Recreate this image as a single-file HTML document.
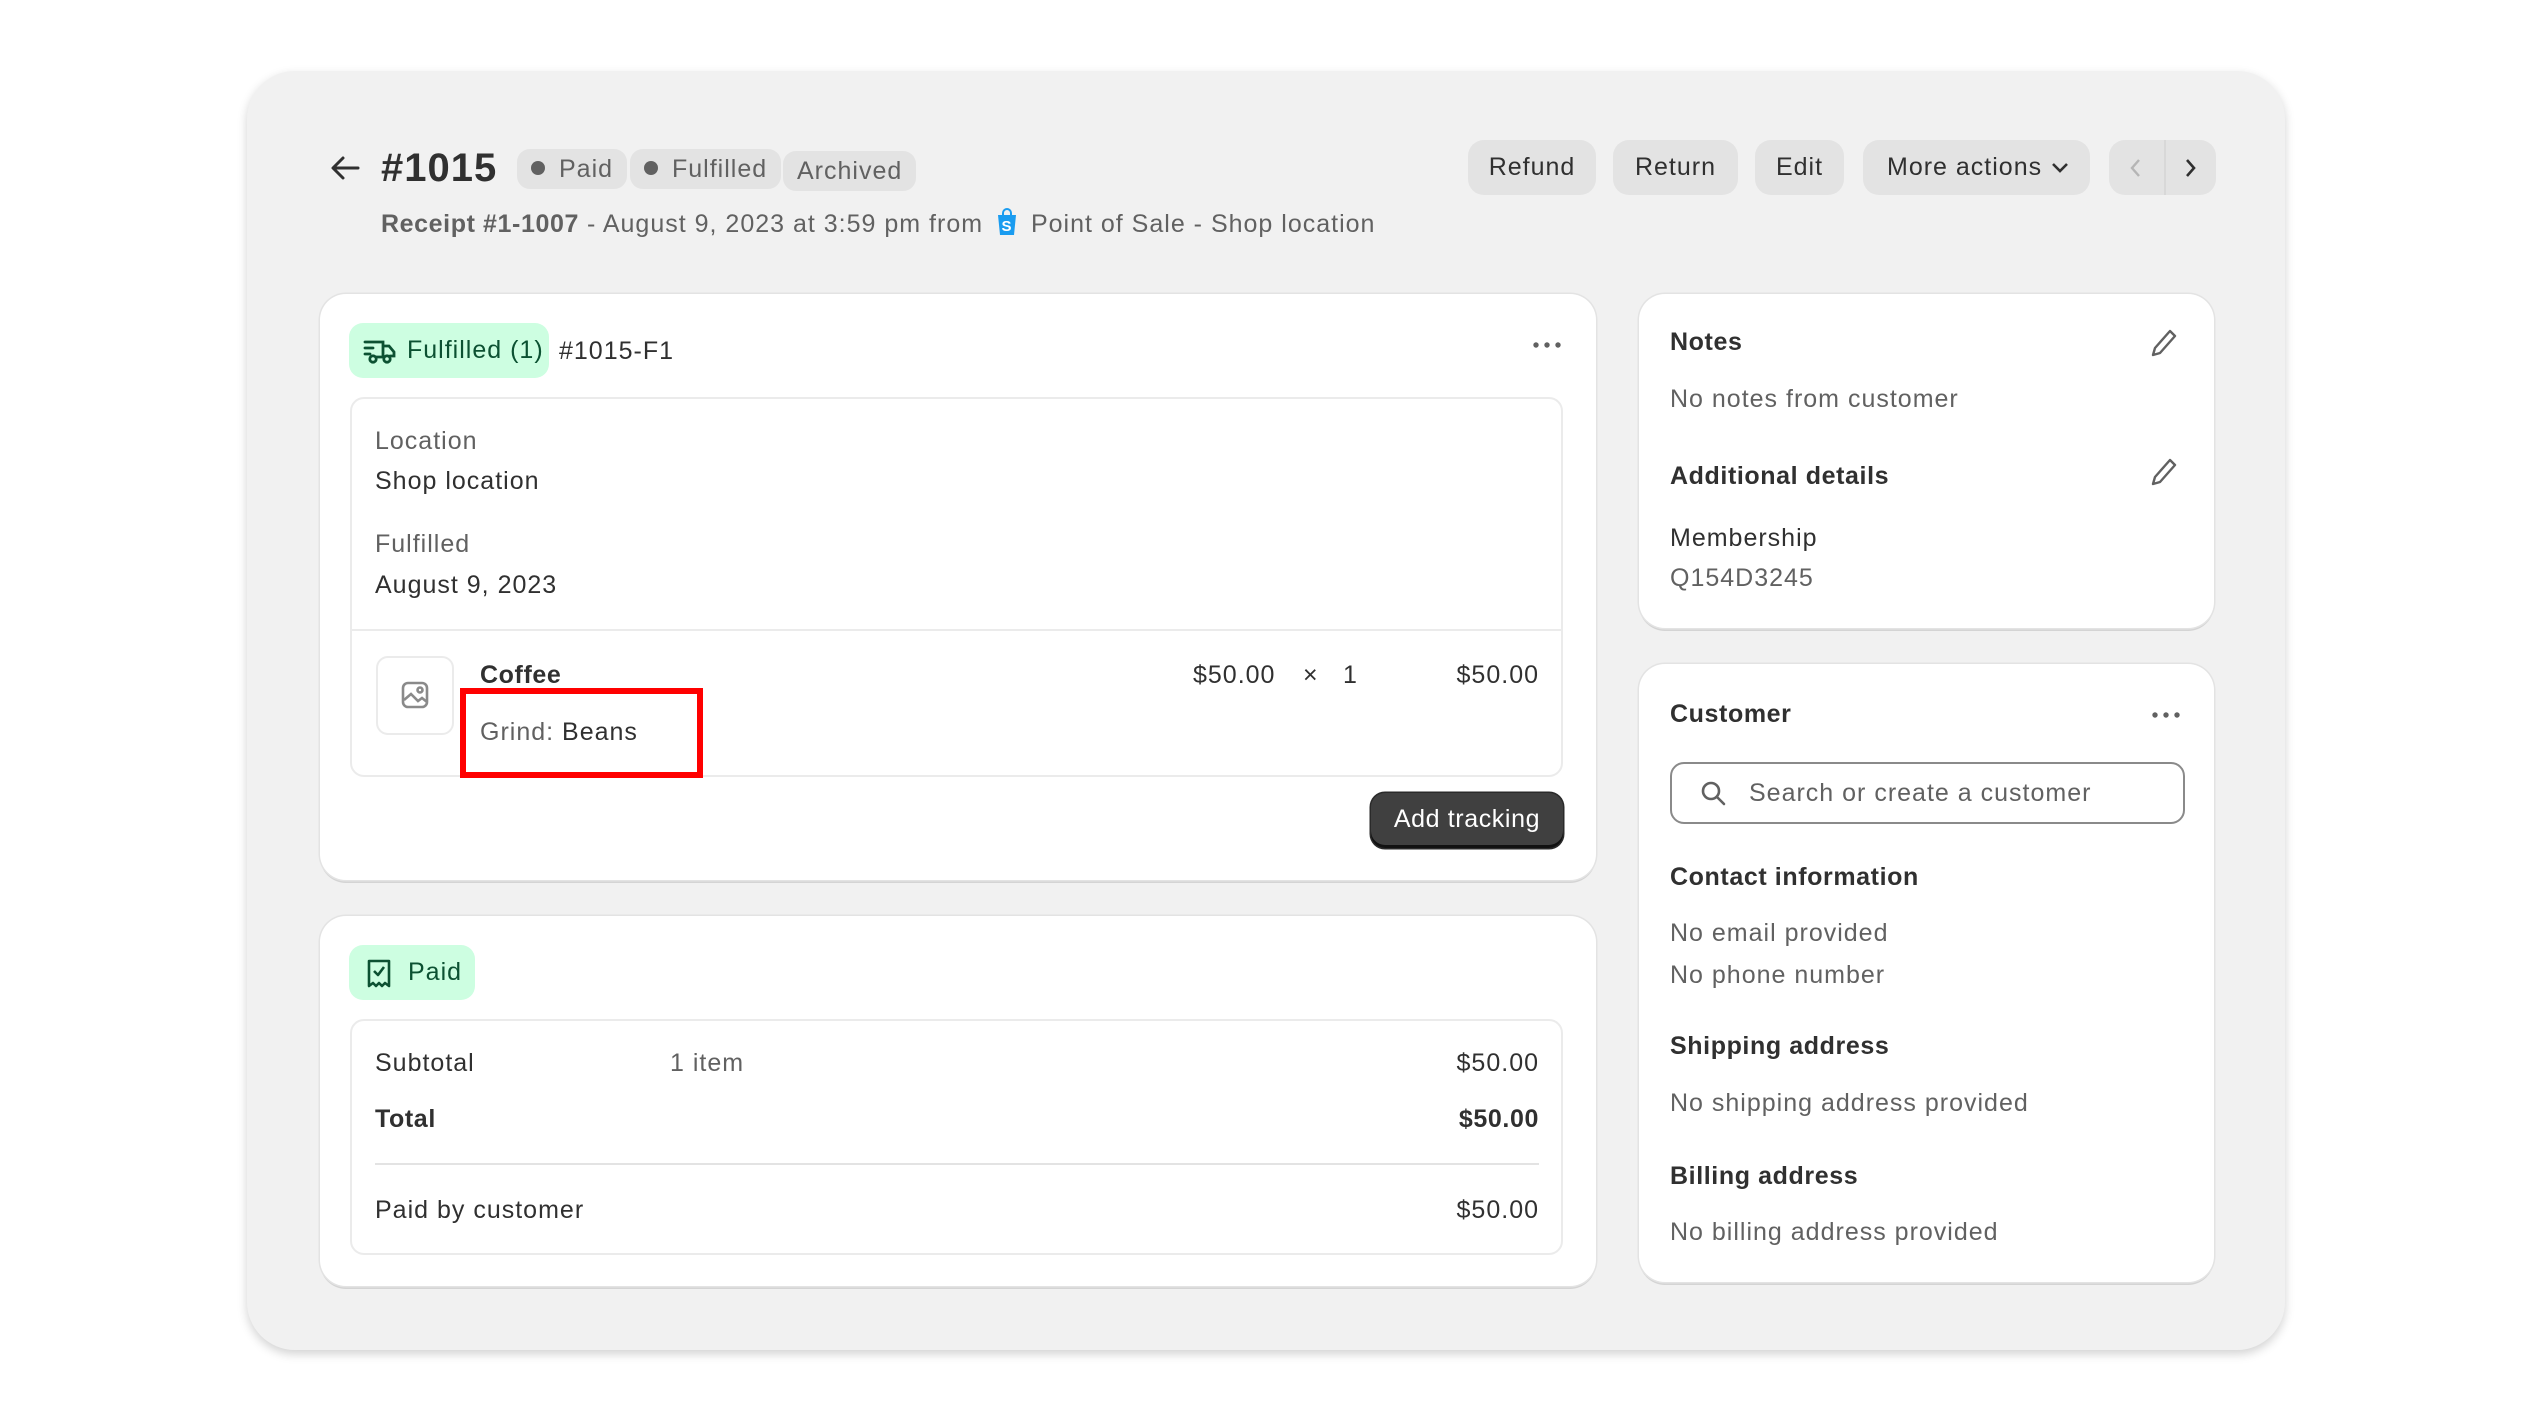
<!DOCTYPE html>
<html><head><meta charset="utf-8"><style>
*{margin:0;padding:0;box-sizing:border-box}
body{width:2532px;height:1422px;background:#fff;position:relative;overflow:hidden;font-family:"Liberation Sans",sans-serif;color:#303030;font-size:25px;letter-spacing:1px}
.a{position:absolute}
.t{position:absolute;line-height:32px;white-space:nowrap}
.frame{left:247px;top:71px;width:2038px;height:1279px;background:#f1f1f1;border-radius:48px;box-shadow:0 4px 10px rgba(0,0,0,.18)}
.card{position:absolute;background:#fff;border-radius:26px;box-shadow:0 0 0 1.5px #e3e3e3,0 3px 0 #d4d4d4}
.inner{position:absolute;border:2px solid #ebebeb;border-radius:14px;background:#fff}
.badge{position:absolute;background:#e3e3e3;border-radius:13px;height:40px;line-height:40px;color:#616161;font-size:25px;padding:0 14px}
.btn{position:absolute;background:#e3e3e3;border-radius:16px;height:55px;line-height:55px;text-align:center;font-size:25px;color:#303030}
.b{font-weight:bold;letter-spacing:0.6px}
.s{color:#616161}
.dot{display:inline-block;width:14px;height:14px;border-radius:50%;background:#616161;margin-right:14px;vertical-align:middle;position:relative;top:-2px}
.green{position:absolute;background:#cdfee1;border-radius:14px;color:#0c5132;font-size:25px}
</style></head><body>
<div class="a frame"></div>

<svg class="a" style="left:330px;top:155px" width="30" height="26" viewBox="0 0 30 26"><path d="M28 13H4M13 3L3 13l10 10" stroke="#303030" stroke-width="3" fill="none" stroke-linecap="round" stroke-linejoin="round"/></svg>
<div class="t b" style="left:381px;top:146px;font-size:40px;line-height:44px;letter-spacing:1px">#1015</div>
<div class="badge" style="left:517px;top:149px"><span class="dot"></span>Paid</div>
<div class="badge" style="left:630px;top:149px"><span class="dot"></span>Fulfilled</div>
<div class="badge" style="left:783px;top:151px">Archived</div>

<div class="btn" style="left:1468px;top:140px;width:128px">Refund</div>
<div class="btn" style="left:1613px;top:140px;width:125px">Return</div>
<div class="btn" style="left:1755px;top:140px;width:89px">Edit</div>
<div class="btn" style="left:1863px;top:140px;width:227px;text-align:left;padding-left:24px">More actions
<svg style="position:absolute;left:188px;top:22px" width="18" height="12" viewBox="0 0 18 12"><path d="M2 2l7 7 7-7" stroke="#303030" stroke-width="2.6" fill="none"/></svg></div>
<div class="btn" style="left:2109px;top:140px;width:107px"></div>
<div class="a" style="left:2164px;top:140px;width:2px;height:55px;background:#d8d8d8"></div>
<svg class="a" style="left:2128px;top:157px" width="14" height="22" viewBox="0 0 14 22"><path d="M11 3L4 11l7 8" stroke="#b5b5b5" stroke-width="2.4" fill="none"/></svg>
<svg class="a" style="left:2184px;top:157px" width="14" height="22" viewBox="0 0 14 22"><path d="M3 3l7 8-7 8" stroke="#303030" stroke-width="2.6" fill="none"/></svg>

<div class="t s" style="left:381px;top:207px"><span class="b" style="color:#616161">Receipt #1-1007</span> - August 9, 2023 at 3:59 pm from <svg style="vertical-align:-5px;margin:0 4px" width="24" height="30" viewBox="0 0 24 30"><path d="M3 8h18l-2 20H5z" fill="#1a9cf0"/><path d="M8 8V6a4 4 0 018 0v2" stroke="#1a9cf0" stroke-width="2" fill="none"/><text x="12" y="24" font-size="15" fill="#fff" text-anchor="middle" font-weight="bold" font-family="Liberation Sans">S</text></svg> Point of Sale - Shop location</div>

<!-- Fulfilled card -->
<div class="card" style="left:320px;top:294px;width:1276px;height:586px"></div>
<div class="green" style="left:349px;top:323px;width:200px;height:55px;line-height:55px;padding-left:58px">Fulfilled (1)</div>
<svg class="a" style="left:363px;top:337px" width="34" height="28" viewBox="0 0 34 28"><g stroke="#0c5132" stroke-width="2.8" fill="none" stroke-linecap="round"><path d="M2 5h18v14M20 9h6l5 6v4h-4M2 11h8M2 17h5"/><circle cx="10" cy="22" r="3.2"/><circle cx="24" cy="22" r="3.2"/><path d="M13 20h8"/></g></svg>
<div class="t" style="left:559px;top:335px">#1015-F1</div>
<svg class="a" style="left:1532px;top:340px" width="30" height="10"><circle cx="4" cy="5" r="2.7" fill="#616161"/><circle cx="15" cy="5" r="2.7" fill="#616161"/><circle cx="26" cy="5" r="2.7" fill="#616161"/></svg>
<div class="inner" style="left:350px;top:397px;width:1213px;height:380px"></div>
<div class="t s" style="left:375px;top:425px">Location</div>
<div class="t" style="left:375px;top:465px">Shop location</div>
<div class="t s" style="left:375px;top:528px">Fulfilled</div>
<div class="t" style="left:375px;top:569px">August 9, 2023</div>
<div class="a" style="left:352px;top:629px;width:1209px;height:2px;background:#ebebeb"></div>
<div class="a" style="left:376px;top:656px;width:78px;height:79px;border:2px solid #ebebeb;border-radius:12px"></div>
<svg class="a" style="left:400px;top:680px" width="30" height="30" viewBox="0 0 30 30"><g stroke="#8a8a8a" stroke-width="2.6" fill="none"><rect x="3" y="3" width="24" height="24" rx="5"/><path d="M4 20l7-6 7 7 4-3 5 4"/><circle cx="20" cy="10" r="2.5"/></g></svg>
<div class="t b" style="left:480px;top:659px">Coffee</div>
<div class="t" style="left:480px;top:716px"><span class="s">Grind:</span> Beans</div>
<div class="a" style="left:460px;top:688px;width:243px;height:90px;border:6px solid #f00"></div>
<div class="t" style="left:1193px;top:659px">$50.00</div>
<div class="t" style="left:1303px;top:659px">×</div>
<div class="t" style="left:1343px;top:659px">1</div>
<div class="t" style="left:400px;width:1139px;text-align:right;top:659px">$50.00</div>
<div class="a" style="left:1371px;top:793px;width:192px;height:55px;background:#404040;border-radius:14px;color:#fff;text-align:center;line-height:53px;box-shadow:inset 0 -3px 0 #111,0 0 0 1.5px #2a2a2a;letter-spacing:0.6px">Add tracking</div>

<!-- Paid card -->
<div class="card" style="left:320px;top:916px;width:1276px;height:370px"></div>
<div class="green" style="left:349px;top:945px;width:126px;height:55px;line-height:55px;padding-left:59px">Paid</div>
<svg class="a" style="left:366px;top:958px" width="26" height="30" viewBox="0 0 26 30"><g stroke="#0c5132" stroke-width="2.6" fill="none" stroke-linejoin="round"><path d="M3 3h20v25l-4-3-3 3-3-3-3 3-3-3-4 3z"/><path d="M8 13l4 4 6-8"/></g></svg>
<div class="inner" style="left:350px;top:1019px;width:1213px;height:236px"></div>
<div class="t" style="left:375px;top:1047px">Subtotal</div>
<div class="t s" style="left:670px;top:1047px">1 item</div>
<div class="t" style="left:400px;width:1139px;text-align:right;top:1047px">$50.00</div>
<div class="t b" style="left:375px;top:1103px">Total</div>
<div class="t b" style="left:400px;width:1139px;text-align:right;top:1103px">$50.00</div>
<div class="a" style="left:375px;top:1163px;width:1164px;height:2px;background:#e3e3e3"></div>
<div class="t" style="left:375px;top:1194px">Paid by customer</div>
<div class="t" style="left:400px;width:1139px;text-align:right;top:1194px">$50.00</div>

<!-- Notes card -->
<div class="card" style="left:1639px;top:294px;width:575px;height:334px"></div>
<div class="t b" style="left:1670px;top:326px">Notes</div>
<svg class="a" style="left:2150px;top:328px" width="28" height="30" viewBox="0 0 28 30"><path d="M20 3l5 5-15 17-7 2 2-7z" stroke="#616161" stroke-width="2.4" fill="none" stroke-linejoin="round"/></svg>
<div class="t s" style="left:1670px;top:383px">No notes from customer</div>
<div class="t b" style="left:1670px;top:460px">Additional details</div>
<svg class="a" style="left:2150px;top:457px" width="28" height="30" viewBox="0 0 28 30"><path d="M20 3l5 5-15 17-7 2 2-7z" stroke="#616161" stroke-width="2.4" fill="none" stroke-linejoin="round"/></svg>
<div class="t" style="left:1670px;top:522px">Membership</div>
<div class="t s" style="left:1670px;top:562px">Q154D3245</div>

<!-- Customer card -->
<div class="card" style="left:1639px;top:664px;width:575px;height:618px"></div>
<div class="t b" style="left:1670px;top:698px">Customer</div>
<svg class="a" style="left:2151px;top:710px" width="30" height="10"><circle cx="4" cy="5" r="2.7" fill="#616161"/><circle cx="15" cy="5" r="2.7" fill="#616161"/><circle cx="26" cy="5" r="2.7" fill="#616161"/></svg>
<div class="a" style="left:1670px;top:762px;width:515px;height:62px;border:2px solid #8a8a8a;border-radius:14px"></div>
<svg class="a" style="left:1700px;top:780px" width="28" height="28" viewBox="0 0 28 28"><g stroke="#616161" stroke-width="2.6" fill="none" stroke-linecap="round"><circle cx="11" cy="11" r="8"/><path d="M17 17l7 7"/></g></svg>
<div class="t s" style="left:1749px;top:777px">Search or create a customer</div>
<div class="t b" style="left:1670px;top:861px">Contact information</div>
<div class="t s" style="left:1670px;top:917px">No email provided</div>
<div class="t s" style="left:1670px;top:959px">No phone number</div>
<div class="t b" style="left:1670px;top:1030px">Shipping address</div>
<div class="t s" style="left:1670px;top:1087px">No shipping address provided</div>
<div class="t b" style="left:1670px;top:1160px">Billing address</div>
<div class="t s" style="left:1670px;top:1216px">No billing address provided</div>
</body></html>
